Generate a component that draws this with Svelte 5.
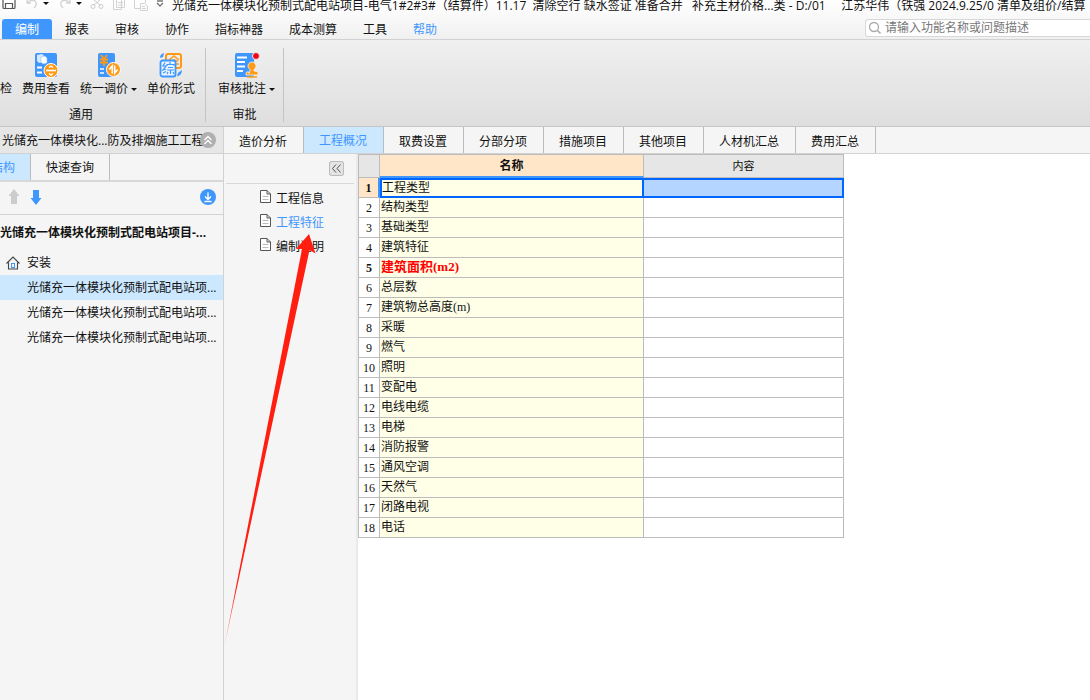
<script lang="ts">
  const menus = ['编制', '报表', '审核', '协作', '指标神器', '成本测算', '工具', '帮助'];
  const tabs = ['造价分析', '工程概况', '取费设置', '分部分项', '措施项目', '其他项目', '人材机汇总', '费用汇总'];
  const outline = ['工程信息', '工程特征', '编制说明'];
  const features = [
    '工程类型', '结构类型', '基础类型', '建筑特征', '建筑面积(m2)', '总层数',
    '建筑物总高度(m)', '采暖', '燃气', '照明', '变配电', '电线电缆', '电梯',
    '消防报警', '通风空调', '天然气', '闭路电视', '电话'
  ];
  const units = ['光储充一体模块化预制式配电站项...', '光储充一体模块化预制式配电站项...', '光储充一体模块化预制式配电站项...'];

  let menu = $state('编制');
  let tab = $state('工程概况');
  let section = $state('工程特征');
  let unit = $state(0);
  let row = $state(0);
  let query = $state('');
</script>

<div class="app">
  <header>
    <div class="titlebar">
      <div class="quick">
        <button class="q" aria-label="保存"><svg width="14" height="10" viewBox="0 0 14 10"><path d="M1 0V7.5Q1 8.5 2 8.5H12Q13 8.5 13 7.5V0M3.5 8V3.5H10.5V8" fill="none" stroke="#555" stroke-width="1.2" /></svg></button>
        <button class="q undo" aria-label="撤销"><svg width="14" height="10" viewBox="0 0 14 10"><path d="M2 0V3H6M2 3Q6-1 10 1Q13 4 9 8" fill="none" stroke="#d2d2d2" stroke-width="1.3" /></svg></button>
        <button class="q drop" aria-label="撤销列表"><svg width="6" height="10" viewBox="0 0 6 10"><path d="M0 2H6L3 5Z" fill="#111" /></svg></button>
        <button class="q redo" aria-label="恢复"><svg width="14" height="10" viewBox="0 0 14 10"><path d="M12 0V3H8M12 3Q8-1 4 1Q1 4 5 8" fill="none" stroke="#d2d2d2" stroke-width="1.3" /></svg></button>
        <button class="q drop" aria-label="恢复列表"><svg width="6" height="10" viewBox="0 0 6 10"><path d="M0 2H6L3 5Z" fill="#111" /></svg></button>
        <button class="q cut" aria-label="剪切"><svg width="14" height="10" viewBox="0 0 14 10"><path d="M4 0L10 5M10 0L4 5" stroke="#ccc" /><circle cx="3" cy="6.5" r="2" fill="none" stroke="#ccc" /><circle cx="11" cy="6.5" r="2" fill="none" stroke="#ccc" /></svg></button>
        <button class="q copy" aria-label="复制"><svg width="14" height="10" viewBox="0 0 14 10"><path d="M1.5 0V9.5H9.5V0M4.5 0V7.5H12.5V0M6 2.5H11M6 5H11" fill="none" stroke="#d2d2d2" /></svg></button>
        <button class="q paste" aria-label="粘贴"><svg width="14" height="11" viewBox="0 0 14 11"><path d="M.5 0V8.5H6M11.5 0V3M6.5 3.5H10.5L13.5 6V10.5H6.5ZM8 6.5H11M8 8.5H12" fill="none" stroke="#d2d2d2" /></svg></button>
        <button class="q more" aria-label="自定义"><svg width="8" height="10" viewBox="0 0 8 10"><path d="M1 1H7M1 3L4 6L7 3" fill="none" stroke="#777" stroke-width="1.4" /></svg></button>
      </div>
      <span class="title">光储充一体模块化预制式配电站项目-电气1#2#3#（结算件）11.17&nbsp; 清除空行 缺水签证 准备合并&nbsp;&nbsp; 补充主材价格...类 - D:/01 &nbsp;&nbsp;&nbsp; 江苏华伟（铁强 2024.9.25/0 清单及组价/结算</span>
    </div>
    <div class="menubar">
      <nav>
        {#each menus as m}
          <button class="menu" class:active={menu === m} class:help={m === '帮助'} onclick={() => (menu = m)}>{m}</button>
        {/each}
      </nav>
      <label class="search">
        <svg width="14" height="14" viewBox="0 0 14 14"><circle cx="6" cy="6" r="4.5" fill="none" stroke="#aaa" stroke-width="1.3" /><path d="M9.5 9.5L12.5 12.5" stroke="#aaa" stroke-width="1.6" /></svg>
        <input bind:value={query} placeholder="请输入功能名称或问题描述" aria-label="搜索" />
      </label>
    </div>
    <div class="ribbon">
      <section class="group common">
        <div class="tools">
          <button class="tool cropped"><span>检</span></button>
          <button class="tool">
            <svg width="24" height="26" viewBox="0 0 24 26">
              <rect x="1" y="1" width="22" height="24" rx="2" fill="#3f97fd" />
              <path d="M3 3L8 2L10 4V10L5 11L3 9Z" fill="#d7eaff" /><path d="M7 5L11 4L13 6V11L9 12L7 10Z" fill="#fff" stroke="#8ec3ff" stroke-width=".6" />
              <path d="M3 15.5H8M3 20.5H8" stroke="#fff" stroke-width="2" />
              <circle cx="17" cy="18.5" r="7" fill="#ff9a16" stroke="#fff" />
              <path d="M12 18.5H22" stroke="#fff" stroke-width="1.6" /><path d="M15 15.500L17 14L19 15.500M15 21.500L17 23L19 21.500" fill="none" stroke="#fff" stroke-width="1.4" />
            </svg>
            <span>费用查看</span>
          </button>
          <button class="tool">
            <svg width="24" height="26" viewBox="0 0 24 26">
              <rect x="1" y="1" width="17" height="24" rx="2" fill="#3f97fd" />
              <path d="M4 3L7 7L10 3M3 7.500H11M3 10.500H11M7 7V14" fill="none" stroke="#ff9a16" stroke-width="1.8" />
              <path d="M3 17H7M3 21H7" stroke="#fff" stroke-width="1.6" />
              <circle cx="16.500" cy="17.500" r="7" fill="#ff9a16" stroke="#fff" />
              <path d="M15.300 21.500V14L12.300 17.500M17.700 13.500V21L20.700 17.500" fill="none" stroke="#fff" stroke-width="1.6" />
            </svg>
            <span>统一调价<i class="caret"></i></span>
          </button>
          <button class="tool">
            <svg width="24" height="26" viewBox="0 0 24 26">
              <rect x="7" y="2" width="15" height="14" rx="2" fill="none" stroke="#ff9a16" stroke-width="2" />
              <path d="M10 8L15 4L20 8M12 9H19M15.500 7V14M11 12H20" fill="none" stroke="#ff9a16" stroke-width="1.600" />
              <path d="M1 6Q1 2 5 1L4 5ZM23 18Q23 23 18 24.500L19 21Z" fill="#3f97fd" />
              <rect x="1.500" y="8.500" width="15" height="16" rx="2" fill="#e9f4ff" stroke="#3f97fd" stroke-width="1.800" />
              <path d="M6 10.500L4 14H7L4 18L7 17M4 21L7 19.500M11 10V12M8 14V12.500H15V14M9 15.500H14M8 18H15M11.500 18V22M9 20L8 22M14 20L15 22" fill="none" stroke="#3f97fd" stroke-width="1.200" />
            </svg>
            <span>单价形式</span>
          </button>
        </div>
        <p>通用</p>
      </section>
      <section class="group review">
        <div class="tools">
          <button class="tool">
            <svg width="26" height="26" viewBox="0 0 26 26">
              <rect x="1" y="1" width="19" height="24" rx="2" fill="#3f97fd" />
              <path d="M3 5.500H13M3 10H11M3 14.500H11M3 19H9" stroke="#fff" stroke-width="1.800" />
              <circle cx="22" cy="4" r="3.500" fill="#f00514" stroke="#ededed" />
              <path d="M15 21.500V20Q12 19 12 21.500V23H24V20.500Q24 19 20 19V17.500A4 4 0 1 0 16 17.500V19Z" fill="#ff9a16" stroke="#f4f4f4" stroke-width=".8" /><path d="M13 25H23" stroke="#ff9a16" stroke-width="1.500" />
            </svg>
            <span>审核批注<i class="caret"></i></span>
          </button>
        </div>
        <p>审批</p>
      </section>
    </div>
  </header>

  <main>
    <aside>
      <div class="project">
        <span>光储充一体模块化...防及排烟施工工程</span>
        <button class="fold" aria-label="收起"><svg width="16" height="16" viewBox="0 0 16 16"><circle cx="8" cy="8" r="8" fill="#b0b0b0" /><path d="M4.500 8L8 4.500L11.500 8M4.500 12L8 8.500L11.500 12" fill="none" stroke="#fff" stroke-width="1.300" /></svg></button>
      </div>
      <div class="sidetabs">
        <button class="structure">结构</button>
        <button class="lookup">快速查询</button>
      </div>
      <div class="arrows">
        <button class="q" aria-label="上移"><svg width="12" height="16" viewBox="0 0 12 16"><path d="M6 0L11.500 7H9V15H3V7H.5Z" fill="#ccc" /></svg></button>
        <button class="q" aria-label="下移"><svg width="12" height="16" viewBox="0 0 12 16"><path d="M6 16L.5 9H3V1H9V9H11.500Z" fill="#3f97fd" /></svg></button>
        <button class="q download" aria-label="导入"><svg width="16" height="16" viewBox="0 0 16 16"><circle cx="8" cy="8" r="8" fill="#3f97fd" /><path d="M8 3.500V10M5 7.500L8 10.500L11 7.500M4.500 12.500H11.500" fill="none" stroke="#fff" stroke-width="1.400" /></svg></button>
      </div>
      <h2>光储充一体模块化预制式配电站项目-...</h2>
      <div class="branch">
        <svg width="14" height="14" viewBox="0 0 14 14"><path d="M.5 7.500L7 1L13.500 7.500M2.500 6.500V13H11.500V6.500" fill="none" stroke="#444" stroke-width="1.100" /><rect x="5.500" y="7.500" width="3" height="4" fill="none" stroke="#3f97fd" /></svg>
        安装
      </div>
      {#each units as u, i}
        <button class="unit" class:active={unit === i} onclick={() => (unit = i)}>{u}</button>
      {/each}
    </aside>

    <div class="work">
      <nav class="tabs">
        {#each tabs as t}
          <button class:active={tab === t} onclick={() => (tab = t)}>{t}</button>
        {/each}
      </nav>
      <div class="body">
        <div class="outline">
          <div class="outline-head">
            <button aria-label="折叠"><svg width="15" height="15" viewBox="0 0 15 15"><path d="M7 3.500L3.500 7.500L7 11.500M11.500 3.500L8 7.500L11.500 11.500" fill="none" stroke="#555" /></svg></button>
          </div>
          {#each outline as o}
            <button class="entry" class:active={section === o} onclick={() => (section = o)}>
              <svg width="11" height="13" viewBox="0 0 11 13"><path d="M.5.5H7L10.500 4V12.500H.5Z" fill="#fff" stroke="#555" /><path d="M7 .5V4H10.500" fill="none" stroke="#555" /><path d="M2.500 6.500H8.500M2.500 9.500H8.500" stroke="#bbb" /></svg>
              <span>{o}</span>
            </button>
          {/each}
          <svg class="pointer" width="92" height="416" viewBox="224 234 92 416">
            <defs>
              <linearGradient id="fade" x1="0" y1="0" x2="0" y2="1">
                <stop offset="0.85" stop-color="#ff1e10" />
                <stop offset="1" stop-color="#ff1e10" stop-opacity="0.3" />
              </linearGradient>
            </defs>
            <path d="M309 234L315.500 253.500L309.500 250L224 648L302 249L296 249Z" fill="url(#fade)" />
          </svg>
        </div>
        <div class="sheet">
          <table>
            <thead>
              <tr><th class="num" aria-label="序号"></th><th class="name">名称</th><th class="value">内容</th></tr>
            </thead>
            <tbody>
              {#each features as f, i}
                <tr class:selected={row === i} class:required={f.includes('m2')} onclick={() => (row = i)}>
                  <td class="num">{i + 1}</td>
                  <td class="name">{f}</td>
                  <td class="value"></td>
                </tr>
              {/each}
            </tbody>
          </table>
        </div>
      </div>
    </div>
  </main>
</div>

<style>
  :global(body) {
    margin: 0;
  }

  .app {
    display: flex;
    flex-direction: column;
    min-height: 100vh;
    overflow: hidden;
    background: #fff;
    color: #111;
    font: 12px/16px "Open Sans", "Noto Sans CJK SC", sans-serif;
  }

  .app * {
    box-sizing: border-box;
  }

  button {
    margin: 0;
    padding: 0;
    border: 0;
    background: none;
    color: inherit;
    font: inherit;
    white-space: nowrap;
  }

  svg {
    display: block;
    flex: none;
  }

  header {
    background: linear-gradient(#fff, #f0f0f0 40px, #dedede);
    border-bottom: 1px solid #c6c6c6;
  }

  .titlebar {
    display: flex;
    height: 19px;
    overflow: hidden;
  }

  .quick {
    display: flex;
    align-items: flex-start;
    flex: none;
    width: 172px;
    padding-left: 2px;
  }

  .undo {
    margin-left: 9px;
  }

  .drop {
    margin-left: 4px;
  }

  .redo {
    margin-left: 9px;
  }

  .cut,
  .copy,
  .paste,
  .more {
    margin-left: 8px;
  }

  .title {
    line-height: 11px;
    white-space: nowrap;
  }

  .menubar {
    display: flex;
    height: 21px;
    padding-left: 2px;
    border-bottom: 1px solid #d2d2d2;
  }

  nav {
    display: flex;
  }

  .menu {
    padding: 2px 13px 0;
    line-height: 18px;
  }

  .menu.active {
    border-radius: 3px 3px 0 0;
    background: #3f97fd;
    color: #fff;
  }

  .help {
    color: #3f97fd;
  }

  .search {
    display: flex;
    align-items: center;
    gap: 3px;
    width: 225px;
    height: 18px;
    margin-left: auto;
    padding-left: 2px;
    border: 1px solid #d8d8d8;
    border-right: 0;
    border-radius: 3px 0 0 3px;
    background: #fff;
  }

  .search input {
    flex: 1;
    min-width: 0;
    height: 16px;
    padding: 0;
    border: 0;
    outline: 0;
    background: none;
    font: inherit;
  }

  .search input::placeholder {
    color: #777;
    opacity: 1;
  }

  .ribbon {
    display: flex;
    padding: 8px 0 4px;
  }

  .group {
    display: flex;
    flex-direction: column;
    border-right: 1px solid #c4c4c4;
  }

  .group p {
    margin: 10px 0 0;
    line-height: 15px;
    text-align: center;
  }

  .common p {
    padding-right: 43px;
  }

  .tools {
    display: flex;
    align-items: flex-end;
    padding-top: 4px;
  }

  .common .tools {
    gap: 10px;
    padding-right: 10px;
  }

  .review .tools {
    padding: 4px 8px 0 12px;
  }

  .tool {
    display: flex;
    flex-direction: column;
    align-items: center;
    gap: 3px;
  }

  .caret {
    display: inline-block;
    margin-left: 3px;
    border: 3px solid transparent;
    border-top-color: #111;
    border-bottom: 0;
    vertical-align: 2px;
  }

  main {
    display: flex;
    flex: 1;
  }

  aside {
    flex: none;
    width: 224px;
    border-right: 1px solid #d2d2d2;
    background: #f5f5f5;
  }

  .project {
    position: relative;
    height: 27px;
    padding-left: 2px;
    border-bottom: 1px solid #d2d2d2;
    background: #e6e6e6;
    line-height: 27px;
    white-space: nowrap;
  }

  .fold {
    position: absolute;
    top: 5px;
    right: 7px;
  }

  .sidetabs {
    display: flex;
    height: 28px;
    border-bottom: 2px solid #d8d8d8;
  }

  .sidetabs button {
    padding-top: 2px;
    border-right: 1px solid #bcbcbc;
  }

  .sidetabs .structure {
    display: flex;
    align-items: center;
    justify-content: flex-end;
    width: 31px;
    padding-right: 15px;
    overflow: hidden;
    background: #cce8ff;
    color: #3f97fd;
  }

  .sidetabs .lookup {
    padding-right: 15px;
    padding-left: 15px;
  }

  .arrows {
    display: flex;
    align-items: center;
    gap: 10px;
    height: 33px;
    padding: 0 7px 2px 8px;
    border-bottom: 1px solid #d2d2d2;
  }

  .download {
    margin-left: auto;
  }

  h2 {
    margin: 0;
    font-size: 12px;
    line-height: 36px;
    white-space: nowrap;
  }

  .branch {
    display: flex;
    align-items: center;
    gap: 7px;
    height: 24px;
    padding-left: 6px;
  }

  .unit {
    display: block;
    width: 100%;
    padding-left: 27px;
    overflow: hidden;
    line-height: 25px;
    text-align: left;
  }

  .unit.active {
    background: #cce8ff;
  }

  .work {
    display: flex;
    flex: 1;
    flex-direction: column;
    min-width: 0;
  }

  .tabs {
    height: 27px;
    border-bottom: 1px solid #d2d2d2;
    background: #f5f5f5;
  }

  .tabs button {
    padding: 4px 16px 0 15px;
    border-right: 1px solid #bcbcbc;
  }

  .tabs .active {
    padding-top: 2px;
    background: #cce8ff;
    color: #3f97fd;
  }

  .body {
    display: flex;
    flex: 1;
  }

  .outline {
    position: relative;
    flex: none;
    width: 134px;
    border-right: 2px solid #eaeaea;
    background: #f5f5f5;
  }

  .outline-head {
    display: flex;
    justify-content: flex-end;
    height: 30px;
    margin: 0 2px 3px;
    padding: 7px 10px 0 0;
    border-bottom: 1px solid #d8d8d8;
  }

  .outline-head button {
    height: 15px;
    border-radius: 3px;
    background: #e4e4e4;
    box-shadow: 0 0 0 1px #bbb inset;
  }

  .entry {
    display: flex;
    align-items: center;
    gap: 5px;
    height: 24px;
    padding-left: 36px;
  }

  .entry svg {
    margin-bottom: 6px;
  }

  .entry.active span {
    color: #3f97fd;
  }

  /* annotation arrow drawn over the list */
  .pointer {
    position: absolute;
    top: 80px;
    left: 0;
    pointer-events: none;
  }

  .sheet {
    flex: 1;
    min-width: 0;
  }

  table {
    width: 486px;
    border: solid #bcbcbc;
    border-width: 1px 0 0 1px;
    border-spacing: 0;
    table-layout: fixed;
    font: 12px/16px "Liberation Serif", "Noto Sans CJK SC", serif;
  }

  th,
  td {
    height: 20px;
    padding: 0;
    border: solid #bcbcbc;
    border-width: 0 1px 1px 0;
    overflow: hidden;
    white-space: nowrap;
  }

  th {
    height: 23px;
    background: #e6e6e6;
  }

  th.num {
    width: 21px;
  }

  th.name {
    width: 264px;
    border-bottom: 2px solid #3f97fd;
    background: #ffe6c8;
  }

  th.value {
    font-size: 11px;
    font-weight: normal;
  }

  td.num {
    text-align: center;
  }

  td.name {
    padding: 0 0 2px 1px;
    background: #ffffe8;
  }

  .required td {
    color: #f00;
    font-size: 13px;
    font-weight: bold;
  }

  .required .num {
    color: #111;
    font-size: 12px;
  }

  .selected .num {
    border-right: 2px solid #3f97fd;
    background: #ffe6c8;
    font-weight: bold;
  }

  .selected .name {
    padding: 0;
    border: 2px solid #06f;
  }

  .selected .value {
    border: 2px solid #06f;
    border-left: 0;
    background: #b3d5ff;
  }
</style>
